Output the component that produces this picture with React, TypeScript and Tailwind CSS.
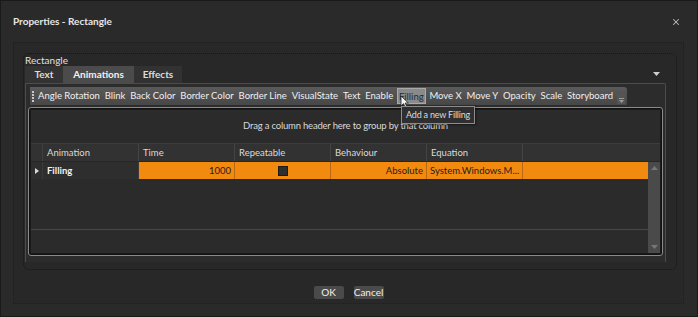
import { X } from "lucide-react";

const font = { fontFamily: "Lato, 'Open Sans', sans-serif" };

const toolItems = [
  "Angle Rotation",
  "Blink",
  "Back Color",
  "Border Color",
  "Border Line",
  "VisualState",
  "Text",
  "Enable",
  "Filling",
  "Move X",
  "Move Y",
  "Opacity",
  "Scale",
  "Storyboard",
];

const columns = ["Animation", "Time", "Repeatable", "Behaviour", "Equation"];

function Toolbar() {
  return (
    <div className="relative ml-[4px] mt-[3px] h-[18px] w-[597px] rounded-tr-[3px] bg-gradient-to-b from-[#5a5a5a] to-[#474747] flex items-center">
      {/* grip */}
      <div className="ml-[2px] mr-[4px] flex flex-col gap-[1px]">
        <span className="block w-[2px] h-[2px] bg-[#c8c8c8]" />
        <span className="block w-[2px] h-[2px] bg-[#c8c8c8]" />
        <span className="block w-[2px] h-[2px] bg-[#c8c8c8]" />
        <span className="block w-[2px] h-[2px] bg-[#c8c8c8]" />
      </div>
      <div className="flex items-center gap-[4.8px] text-[9.5px] text-[#f0f0f0]">
        {toolItems.map((t) =>
          t === "Filling" ? (
            <span key={t} className="relative -mx-[1px] px-[1px] h-[16px] leading-[15px] bg-[#8a8a8a] border border-[#a9a9a9] text-[#1c2a3a]">
              {t}
              {/* cursor */}
              <svg className="absolute left-[2px] top-[6px]" width="10" height="14" viewBox="0 0 10 14">
                <path d="M1 1 L1 11 L3.5 8.6 L5.4 12.8 L7 12 L5.2 8 L8.4 8 Z" fill="#f4f4f4" stroke="#222" strokeWidth="0.8" />
              </svg>
            </span>
          ) : (
            <span key={t} className="whitespace-nowrap">{t}</span>
          )
        )}
      </div>
      <div className="absolute right-[2px] bottom-[1px] h-[10px] w-[8px] bg-[#555] flex flex-col items-center justify-end pb-[1px]">
        <span className="block w-[5px] h-[1px] bg-[#9a9a9a] mb-[1px]" />
        <svg width="5" height="3" viewBox="0 0 5 3"><path d="M0 0 L5 0 L2.5 3 Z" fill="#9a9a9a" /></svg>
      </div>
      {/* tooltip */}
      <div className="absolute left-[371px] top-[19px] z-10 h-[18px] px-[4px] border border-[#8c8c8c] bg-[#2f2f2f] text-[9px] tracking-[-0.2px] leading-[16px] text-[#dcdcdc] whitespace-nowrap shadow-[1px_1px_2px_rgba(0,0,0,0.5)]">
        Add a new Filling
      </div>
    </div>
  );
}

function Grid() {
  return (
    <div className="ml-[2px] mt-[2px] w-[635px] h-[149px] rounded-[3px] border border-[#8a8a8a] p-[1px] bg-[#111]">
      <div className="h-full w-full bg-[#2b2b2b] flex flex-col border border-[#1a1a1a]">
        <div className="h-[34px] flex items-center justify-center text-[9.5px] tracking-[-0.2px] text-[#d8d8d8] border-b border-[#3c3c3c]">
          Drag a column header here to group by that column
        </div>
        {/* header */}
        <div className="h-[18px] flex text-[9.5px] text-[#dadada] bg-[#323232] border-b border-[#262626]">
          <div className="w-[12px] border-r border-[#3f3f3f]" />
          {columns.map((c) => (
            <div key={c} className="w-[96px] px-[4px] leading-[18px] border-r border-[#444]">
              {c}
            </div>
          ))}
          <div className="flex-1" />
        </div>
        <div className="flex flex-1">
          <div className="flex-1 flex flex-col">
            {/* data row */}
            <div className="h-[17px] flex text-[9.5px] leading-[17px]">
              <div className="w-[12px] flex items-center justify-center bg-[#2e2e2e] border-r border-[#3a3a3a]">
                <svg width="4" height="6" viewBox="0 0 4 6"><path d="M0 0 L4 3 L0 6 Z" fill="#d8d8d8" /></svg>
              </div>
              <div className="w-[96px] px-[4px] bg-[#2e2e2e] text-[#f2f2f2] font-bold border-r border-[#3a3a3a]">Filling</div>
              <div className="flex-1 flex bg-[#f28a10] text-[#1e1e1e]">
                <div className="w-[96px] px-[3px] text-right border-r border-[#b86a12]">1000</div>
                <div className="w-[96px] flex items-center justify-center border-r border-[#b86a12]">
                  <span className="block w-[10px] h-[10px] bg-[#2e2e2e] border border-[#1b1b1b]" />
                </div>
                <div className="w-[96px] px-[3px] text-right border-r border-[#b86a12]">Absolute</div>
                <div className="w-[96px] px-[3px] border-r border-[#b86a12] whitespace-nowrap overflow-hidden">System.Windows.M...</div>
                <div className="flex-1" />
              </div>
            </div>
            <div className="flex-1 border-b border-[#474747]" />
            <div className="h-[23px]" />
          </div>
          {/* scrollbar */}
          <div className="w-[12px] bg-[#4a4a4a] flex flex-col items-center justify-between py-[4px]">
            <svg width="7" height="4" viewBox="0 0 7 4"><path d="M0 4 L7 4 L3.5 0 Z" fill="#777" /></svg>
            <svg width="7" height="4" viewBox="0 0 7 4"><path d="M0 0 L7 0 L3.5 4 Z" fill="#777" /></svg>
          </div>
        </div>
      </div>
    </div>
  );
}

export default function App() {
  return (
    <div style={font} className="w-[698px] h-[317px] bg-[#1a1a1a] p-[1px]">
      <div className="w-full h-full bg-[#2a2a2a] flex flex-col">
        <div className="h-[41px] flex items-center justify-between pl-[12px] pr-[16px]">
          <span className="text-[10px] font-bold text-[#e6e6e6]">Properties - Rectangle</span>
          <X className="w-[10px] h-[10px] text-[#bdbdbd]" strokeWidth={2.5} />
        </div>
        <div className="ml-[12px] w-[671px] h-[262px] border border-dotted border-[#1e1e1e] bg-[#282828] flex flex-col">
          <div className="ml-[9px] mt-[10px] w-[654px] h-[217px] rounded-[6px] border border-dotted border-[#151515] pl-[1px] pt-[1px] flex flex-col">
            <div className="text-[10px] text-[#e0e0e0] leading-[11px]">Rectangle</div>
            <div className="flex items-end justify-between pr-[16px]">
              <div className="flex h-[17px] text-[10px] font-bold text-[#dcdcdc]">
                <div className="w-[38px] bg-[#333] flex items-center justify-center">Text</div>
                <div className="w-[71px] bg-[#4b4b4b] flex items-center justify-center text-[#f0f0f0]">Animations</div>
                <div className="w-[48px] bg-[#323232] flex items-center justify-center">Effects</div>
              </div>
              <svg className="mb-[7px]" width="7" height="4" viewBox="0 0 7 4"><path d="M0 0 L7 0 L3.5 4 Z" fill="#cfcfcf" /></svg>
            </div>
            <div className="w-[641px] h-[179px] border-t border-l border-r border-[#4c4c4c] rounded-tr-[2px] bg-[#2c2c2c]">
              <Toolbar />
              <Grid />
            </div>
          </div>
          <div className="flex-1 flex items-start justify-center gap-[10px] pt-[16px]">
            <button className="w-[30px] h-[13px] rounded-[2px] bg-[#4a4a4a] text-[10px] leading-[13px] text-[#f0f0f0]">OK</button>
            <button className="w-[30px] h-[13px] rounded-[2px] bg-[#4a4a4a] text-[10px] leading-[13px] text-[#f0f0f0]">Cancel</button>
          </div>
        </div>
      </div>
    </div>
  );
}
